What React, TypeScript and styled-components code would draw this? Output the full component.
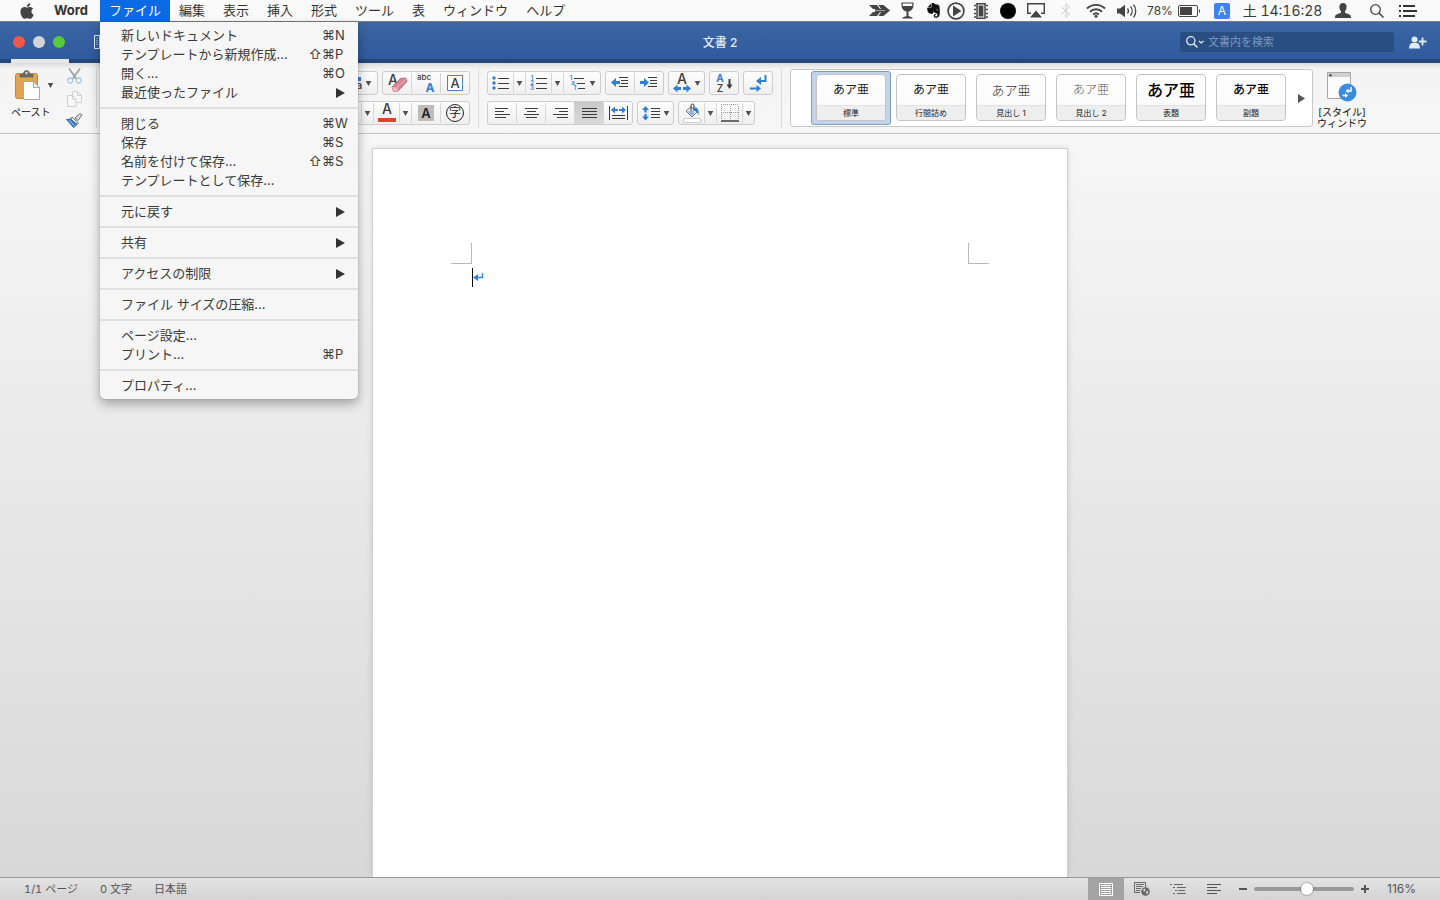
import React from 'react';
import styled, { createGlobalStyle, css } from 'styled-components';
import { FaApple, FaEvernote } from 'react-icons/fa';

const sans = `Inter, "Noto Sans CJK JP", sans-serif`;
const blue = '#2f7fd6';
const ink = '#3c3c3c';

const GlobalStyle = createGlobalStyle`
  * { box-sizing: border-box; }
  body { margin: 0; font-family: ${sans}; color: #333; }
  button, input { font: inherit; color: inherit; margin: 0; padding: 0; border: 0; background: none; }
  svg { display: block; flex: none; overflow: visible; }
  ul { list-style: none; margin: 0; padding: 0; }
`;

const Window = styled.div`
  display: flex;
  flex-direction: column;
  height: 100vh;
  overflow: hidden;
`;

/* ---------- system menu bar ---------- */

const MenuBar = styled.header`
  display: flex;
  justify-content: space-between;
  height: 22px;
  padding-right: 19px;
  background: #fafafa;
  border-bottom: 1px solid #7b7b7b;
  font-size: 13px;
  line-height: 21px;
  position: relative;
  z-index: 2;
`;

const MenuList = styled.nav`
  display: flex;
  padding-left: 9px;
`;

const MenuSlot = styled.div`
  position: relative;
`;

const MenuTitle = styled.button<{ $active?: boolean; $app?: boolean }>`
  display: flex;
  align-items: center;
  min-width: ${(p) => (p.$app ? 55 : 0)}px;
  height: 22px;
  padding: 0 9px 1px;
  white-space: nowrap;
  color: ${(p) => (p.$active ? '#fff' : '#333')};
  background: ${(p) => (p.$active ? '#0b6be4' : 'none')};
  font-weight: ${(p) => (p.$app ? 700 : 400)};
`;

const Dropdown = styled.ul`
  position: absolute;
  top: 22px;
  left: 0;
  width: 258px;
  padding: 4px 0;
  background: #f6f6f6;
  border-radius: 0 0 5px 5px;
  box-shadow: 0 0 1px rgba(0, 0, 0, 0.45), 0 5px 12px rgba(0, 0, 0, 0.32);
`;

const MenuRow = styled.button`
  display: flex;
  align-items: center;
  width: 100%;
  height: 19px;
  padding: 0 9px 0 21px;
  line-height: 19px;
  text-align: left;
  white-space: nowrap;
  color: #3a3a3a;
`;

const MenuLabel = styled.span`
  flex: 1;
`;

const KeyName = styled.span`
  width: 14px;
`;

const SubmenuArrow = styled.span`
  margin-right: 4px;
`;

const MenuRule = styled.li`
  height: 2px;
  margin: 5px 0;
  background: #e0e0e0;
`;

const StatusItems = styled.div`
  display: flex;
`;

const StatusItem = styled.button<{ $w: number }>`
  display: flex;
  align-items: center;
  justify-content: center;
  gap: 5px;
  width: ${(p) => p.$w}px;
  height: 21px;
  white-space: nowrap;
  color: #3a3a3a;
`;

const Percent = styled.span`
  font-size: 12px;
`;

const InputMode = styled.span`
  width: 16px;
  height: 16px;
  border-radius: 2px;
  background: #3f82f0;
  color: #fff;
  font-size: 12px;
  line-height: 16px;
  text-align: center;
`;

const Clock = styled.span`
  font-size: 14px;
  font-variant-numeric: tabular-nums;
`;

/* ---------- window title bar ---------- */

const TitleBar = styled.div`
  display: grid;
  grid-template-columns: 1fr auto 1fr;
  align-items: center;
  height: 37px;
  padding: 3px 13px 0;
  background: linear-gradient(#3c66a5, #2f5b9c);
  flex: none;
`;

const TitleLeft = styled.div`
  display: flex;
  align-items: center;
  gap: 8px;
`;

const Light = styled.button<{ $c: string }>`
  width: 12px;
  height: 12px;
  border-radius: 50%;
  background: ${(p) => p.$c};
`;

const SidebarButton = styled.button`
  margin-left: 21px;
`;

const DocumentTitle = styled.h1`
  margin: 0;
  padding-top: 2px;
  font-size: 12px;
  line-height: 18px;
  font-weight: 500;
  color: #e6ecf5;
`;

const TitleRight = styled.div`
  display: flex;
  align-items: center;
  justify-content: flex-end;
  gap: 15px;
`;

const SearchBox = styled.label`
  display: flex;
  align-items: center;
  gap: 4px;
  width: 214px;
  height: 20px;
  padding-left: 6px;
  border-radius: 3px;
  background: #294e82;
`;

const SearchInput = styled.input`
  flex: 1;
  min-width: 0;
  height: 20px;
  font-size: 11px;
  color: #fff;
  outline: none;
  &::placeholder { color: #7f98bd; opacity: 1; }
`;

const TabStrip = styled.div`
  height: 4px;
  padding-left: 11px;
  background: #23477b;
  flex: none;
`;

const ActiveTab = styled.div`
  width: 58px;
  height: 4px;
  background: #e6e6e6;
`;

/* ---------- ribbon ---------- */

const Ribbon = styled.div`
  display: flex;
  align-items: center;
  height: 71px;
  flex: none;
  background: linear-gradient(#dcdcdc, #f4f4f4 6px, #f6f6f6);
  border-bottom: 1px solid #c6c6c6;
`;

const Divider = styled.div<{ $tight?: boolean }>`
  width: 1px;
  height: 60px;
  margin: 0 ${(p) => (p.$tight ? 0 : 8)}px;
  background: #dcdcdc;
`;

const Clipboard = styled.div`
  display: flex;
  width: 96px;
  height: 60px;
  padding-left: 11px;
`;

const PasteButton = styled.button`
  display: flex;
  flex-direction: column;
  gap: 5px;
  width: 48px;
  padding-top: 2px;
  font-size: 10px;
  line-height: 14px;
  text-align: left;
  white-space: nowrap;
  color: #111;
`;

const PasteIcon = styled.span`
  display: flex;
  align-items: center;
  gap: 7px;
  padding-left: 4px;
`;

const ClipColumn = styled.div`
  display: flex;
  flex-direction: column;
  justify-content: space-between;
  width: 30px;
  align-items: center;
`;

const ClipButton = styled.button`
  display: flex;
`;

const ToolRows = styled.div<{ $w?: number }>`
  display: flex;
  flex-direction: column;
  gap: 6px;
  width: ${(p) => (p.$w ? `${p.$w}px` : 'auto')};
  align-items: ${(p) => (p.$w ? 'flex-end' : 'flex-start')};
`;

const ToolRow = styled.div`
  display: flex;
  gap: 4px;
`;

const ToolGroup = styled.div`
  display: flex;
  height: 24px;
  border: 1px solid #cdcdcd;
  border-radius: 3px;
  background: linear-gradient(#fdfdfd, #efefef);
`;

const ToolButton = styled.button<{ $w?: number; $on?: boolean; $caret?: boolean }>`
  box-sizing: content-box;
  display: flex;
  align-items: center;
  justify-content: center;
  gap: 4px;
  width: ${(p) => p.$w ?? 28}px;
  height: 22px;
  background: ${(p) => (p.$on ? 'linear-gradient(#c9c9c9, #d9d9d9)' : 'none')};
  & + & {
    border-left: 1px solid #d6d6d6;
    ${(p) => p.$caret && css`
      border-image: linear-gradient(transparent 10%, #d6d6d6 10%, #d6d6d6 90%, transparent 90%) 1;
    `}
  }
`;

const Gallery = styled.div`
  display: flex;
  align-items: center;
  height: 58px;
  padding-left: 20px;
  border: 1px solid #c9c9c9;
  border-radius: 3px;
  background: #fff;
`;

const StyleSlot = styled.button<{ $on?: boolean }>`
  width: 80px;
  height: 54px;
  padding: 2px 4px 4px;
  border: 1px solid ${(p) => (p.$on ? '#7c9cc9' : 'transparent')};
  border-radius: 3px;
  background: ${(p) => (p.$on ? '#c3d3ea' : 'none')};
`;

const StyleCard = styled.span`
  display: flex;
  flex-direction: column;
  height: 47px;
  border: 1px solid #c4c4c4;
  border-radius: 4px;
  background: linear-gradient(#fff, #f8f8f8);
  overflow: hidden;
`;

const Sample = styled.span<{ $size: number; $weight: number; $c: string }>`
  height: 30px;
  line-height: 30px;
  font-size: ${(p) => p.$size}px;
  font-weight: ${(p) => p.$weight};
  color: ${(p) => p.$c};
`;

const StyleName = styled.span`
  height: 15px;
  line-height: 14px;
  font-size: 8px;
  color: #222;
  background: #eee;
  border-top: 1px solid #e4e4e4;
`;

const GalleryMore = styled.button`
  display: flex;
  justify-content: center;
  width: 21px;
`;

const StylesPaneButton = styled.button`
  display: flex;
  flex-direction: column;
  align-items: center;
  gap: 5px;
  height: 60px;
  margin-left: 4px;
  padding-top: 4px;
  font-size: 10px;
  line-height: 11px;
  color: #111;
  white-space: nowrap;
`;

/* ---------- document ---------- */

const Desk = styled.main`
  flex: 1;
  min-height: 0;
  display: flex;
  justify-content: center;
  padding-top: 14px;
  overflow: hidden;
  background: linear-gradient(#f7f7f7, #d8d8d8);
`;

const Page = styled.article`
  width: 696px;
  padding: 94px 78px 0;
  border: 1px solid #cfcfcf;
  border-bottom: 0;
  background: #fff;
  box-shadow: 0 0 6px rgba(0, 0, 0, 0.12);
`;

const Margins = styled.div`
  display: flex;
  justify-content: space-between;
`;

const Corner = styled.span<{ $side: 'left' | 'right' }>`
  width: 21px;
  height: 21px;
  border-bottom: 1px solid #b9b9b9;
  ${(p) => (p.$side === 'left'
    ? css`border-right: 1px solid #b9b9b9;`
    : css`border-left: 1px solid #b9b9b9;`)}
`;

const TextLine = styled.div`
  display: flex;
  align-items: center;
  padding: 4px 0 0 21px;
`;

const Caret = styled.span`
  width: 1px;
  height: 19px;
  background: #000;
`;

/* ---------- status bar ---------- */

const StatusBar = styled.footer`
  display: flex;
  align-items: center;
  justify-content: space-between;
  height: 23px;
  flex: none;
  padding: 0 24px;
  border-top: 1px solid #989898;
  background: linear-gradient(#e3e3e3, #d3d3d3);
  font-size: 11px;
  line-height: 22px;
  color: #555;
`;

const StatusTexts = styled.div`
  display: flex;
  gap: 22px;
  font-variant-numeric: tabular-nums;
`;

const ViewTools = styled.div`
  display: flex;
  align-items: center;
`;

const ViewButton = styled.button<{ $on?: boolean }>`
  display: flex;
  align-items: center;
  justify-content: center;
  width: 36px;
  height: 22px;
  background: ${(p) => (p.$on ? '#a3a3a3' : 'none')};
`;

const ZoomButton = styled.button`
  display: flex;
  align-items: center;
  justify-content: center;
  width: 22px;
  height: 22px;
`;

const ZoomSlider = styled.input`
  appearance: none;
  width: 100px;
  height: 14px;
  background: transparent;
  &::-webkit-slider-runnable-track {
    height: 4px;
    border-radius: 2px;
    background: #999;
  }
  &::-webkit-slider-thumb {
    appearance: none;
    width: 12px;
    height: 12px;
    margin-top: -4px;
    border-radius: 50%;
    background: #fff;
    box-shadow: 0 0 1px 1px rgba(0, 0, 0, 0.2);
  }
`;

const ZoomValue = styled.output`
  width: 40px;
  text-align: right;
  font-size: 12px;
`;

/* ---------- drawings ---------- */

const Down = () => (
  <svg width="5" height="5" viewBox="0 0 5 5"><path d="M-.3 0h5.600L2.500 5z" fill="#505050" /></svg>
);

const lines = (rows: [number, number, number][], c = ink) =>
  rows.map(([x, y, w], i) => <path key={i} d={`M${x} ${y}.5h${w}`} stroke={c} strokeWidth="1" />);

const Letter = ({ x, y, s, c = ink, w = 500, children }: {
  x: number; y: number; s: number; c?: string; w?: number; children: React.ReactNode;
}) => (
  <text x={x} y={y} fontSize={s} fill={c} fontWeight={w} fontFamily={sans} textAnchor="middle">{children}</text>
);

const Icon = ({ w, h, children }: { w: number; h: number; children: React.ReactNode }) => (
  <svg width={w} height={h} viewBox={`0 0 ${w} ${h}`} fill="none">{children}</svg>
);

const ArrowLeft = 'M0 4.500 5 0v3h4v3H5v3z';
const ArrowRight = 'M9 4.500 4 0v3H0v3h4v3z';

const Bullets = () => (
  <Icon w={17} h={14}>
    {[2, 7, 12].map((y) => <circle key={y} cx="2" cy={y} r="1.700" fill={blue} />)}
    {lines([[6, 2, 11], [6, 7, 11], [6, 12, 11]])}
  </Icon>
);

const Numbers = () => (
  <Icon w={17} h={16}>
    {['1', '2', '3'].map((n, i) => <Letter key={n} x={2} y={5 + i * 5} s={6} c={blue} w={600}>{n}</Letter>)}
    {lines([[6, 3, 11], [6, 8, 11], [6, 13, 11]])}
  </Icon>
);

const Levels = () => (
  <Icon w={17} h={16}>
    <Letter x={2} y={5} s={6} c={blue} w={600}>1</Letter>
    <Letter x={4} y={10} s={6} c={blue} w={600}>a</Letter>
    <Letter x={6} y={15} s={6} c={blue} w={600}>1</Letter>
    {lines([[5, 3, 10], [8, 8, 8], [9, 13, 7]])}
  </Icon>
);

const Indent = ({ out }: { out?: boolean }) => (
  <Icon w={18} h={12}>
    <path d={out ? ArrowLeft : ArrowRight} transform="translate(0 1)" fill={blue} />
    {lines([[8, 0, 9], [10, 3, 7], [10, 6, 7], [8, 9, 9]])}
  </Icon>
);

const Align = ({ rows }: { rows: [number, number][] }) => (
  <Icon w={15} h={12}>{lines(rows.map(([x, w], i) => [x, i * 3 + 1, w]))}</Icon>
);

const Distribute = () => (
  <Icon w={19} h={14}>
    <path d="M.5 0v14M18.500 0v14" stroke={ink} />
    <path d="M2 4 6 .5V3h3v2H6v2.500zM17 4l-4-3.500V3h-3v2h3v2.500z" fill={blue} />
    {lines([[3, 9, 13], [3, 12, 13]])}
  </Icon>
);

const LineSpacing = () => (
  <Icon w={18} h={15}>
    <path d="M3.500 0 7 4H4.700v2.500H2.300V4H0zM3.500 14.500 7 10.500H4.700V8H2.300v2.500H0z" fill={blue} />
    {lines([[9, 2, 9], [9, 5, 9], [9, 8, 9], [9, 11, 9]])}
  </Icon>
);

const CharScale = () => (
  <Icon w={18} h={20}>
    <Letter x={9} y={11} s={14}>A</Letter>
    <path d="M0 15.500 4.500 11.500v2.500H8v3H4.500v2.500zM18 15.500 13.500 11.500v2.500H10v3h3.500v2.500z" fill={blue} />
  </Icon>
);

const Sort = () => (
  <Icon w={18} h={19}>
    <Letter x={5} y={8} s={10} c={blue} w={700}>A</Letter>
    <Letter x={5} y={18} s={10}>Z</Letter>
    <path d="M14.500 5v8" stroke={ink} strokeWidth="2" />
    <path d="M11.500 10.500h6L14.500 15z" fill={ink} />
  </Icon>
);

const Marks = () => (
  <Icon w={17} h={18}>
    <path d="M15.500 1v6H11" stroke={blue} strokeWidth="2" />
    <path d="M6 7l5-4v8zM11 14.500 6.500 11v7z" fill={blue} />
    <path d="M0 14.500h8" stroke={blue} strokeWidth="2" />
  </Icon>
);

const Bucket = () => (
  <Icon w={18} h={20}>
    <path d="m3 8 5-4 6 5-5 5z" fill="#f4f4f4" stroke="#777" />
    <path d="M8 8V2.500a1.500 1.500 0 0 1 3 0V8" stroke="#333" />
    <path d="M10 4.500c4-1 6.500 2 5.500 8-1-3-2-4-4-5z" fill={blue} />
    <path d="m4.500 8.500 6-1 1 3.500-3 2z" fill="#8db9e8" />
    <path d="M.5 15.500h17v4H.5z" fill="#fff" stroke="#cfcfcf" />
  </Icon>
);

const Borders = () => (
  <Icon w={18} h={18}>
    <path d="M0 .5h18M0 8.500h18M.5 2v14M17.500 2v14M9.500 2v14" stroke="#999" strokeDasharray="1 1" />
    <path d="M0 17h18" stroke={ink} strokeWidth="1.500" />
  </Icon>
);

const FontColor = () => (
  <Icon w={18} h={20}>
    <Letter x={9} y={11} s={14}>A</Letter>
    <path d="M0 15h18v4H0z" fill="#e2412b" />
  </Icon>
);

const ClearFormat = () => (
  <Icon w={21} h={20}>
    <Letter x={6} y={12} s={14}>A</Letter>
    <path d="m5 14 8.500-8.500 5-.5 1.500 3.500L11 18l-4.500.5z" fill="#d98492" stroke="#a95a6a" strokeWidth=".8" />
    <path d="M5 14l5 .5 1 3.500-4.500.5z" fill="#efb4bd" />
    <path d="M10 14.500 19 6" stroke="#f0bcc5" />
  </Icon>
);

const Phonetic = () => (
  <Icon w={20} h={22}>
    <Letter x={8} y={8} s={8}>abc</Letter>
    <Letter x={14} y={20} s={12} c={blue} w={700}>A</Letter>
  </Icon>
);

const Boxed = () => (
  <Icon w={16} h={16}>
    <path d="M.5.500h15v15H.5z" stroke="#3f86cd" fill="#fff" />
    <Letter x={8} y={13} s={13}>A</Letter>
  </Icon>
);

const Shaded = () => (
  <Icon w={16} h={16}>
    <path d="M0 0h16v16H0z" fill="#bdbdbd" />
    <Letter x={8} y={13} s={13} c="#222" w={600}>A</Letter>
  </Icon>
);

const Enclosed = () => (
  <Icon w={18} h={18}>
    <circle cx="9" cy="9" r="8.500" stroke="#222" />
    <Letter x={9} y={13} s={12} c="#222" w={400}>字</Letter>
  </Icon>
);

const CaseIcon = () => (
  <Icon w={12} h={16}>
    <path d="M8 2h3v4H8z" fill={blue} />
    <Letter x={9} y={14} s={11}>a</Letter>
  </Icon>
);

const PasteArt = () => (
  <Icon w={26} h={30}>
    <rect x=".5" y="3.500" width="22" height="25" rx="2" fill="#dfa552" stroke="#c08a3c" />
    <path d="M5 7V4.500h3.500C8.500 1.500 9.500.500 11.500.500s3 1 3 4H18V7z" fill="#6b6b6b" stroke="#555" strokeWidth=".6" />
    <circle cx="11.500" cy="3" r="1.200" fill="#ddd" />
    <path d="M8.500 11.500h10l6 6v12h-16z" fill="#fff" stroke="#a9a9a9" />
    <path d="M18.500 11.500v6h6z" fill="#eee" stroke="#a9a9a9" />
  </Icon>
);

const CutArt = () => (
  <Icon w={15} h={16}>
    <path d="M2 0.500 9.500 11M13 0.500 5.500 11" stroke="#a2a2a2" strokeWidth="1.800" />
    <circle cx="3.200" cy="12.500" r="2.500" stroke="#a9cbe8" strokeWidth="1.300" />
    <circle cx="11.800" cy="12.500" r="2.500" stroke="#a9cbe8" strokeWidth="1.300" />
  </Icon>
);

const CopyArt = () => (
  <Icon w={15} h={16}>
    <path d="M5.500.500h5l4 4v7h-9z" fill="#f8f8f8" stroke="#d0d0d0" />
    <path d="M.5 4.500h5l3.500 3.500v7.500H.5z" fill="#f8f8f8" stroke="#d0d0d0" />
    <path d="M10.500.500v4h4M5.500 4.500V8H9" stroke="#d0d0d0" />
  </Icon>
);

const BrushArt = () => (
  <Icon w={17} h={15}>
    <path d="m9 5 5-4.500 2 1.500-4 5.500z" fill="#ddd" stroke="#666" strokeWidth=".9" />
    <path d="m6 4 6.500 6-1.500 1.500L4.500 6z" fill="#eee" stroke="#555" strokeWidth=".9" />
    <path d="M.5 6.500 4.500 6l6.500 5.500-3.500 3z" fill="#3f83c9" stroke="#2b5a8c" strokeWidth=".8" />
    <path d="m3 7 5.500 6" stroke="#8fc0ee" />
  </Icon>
);

const StylesArt = () => (
  <Icon w={30} h={30}>
    <path d="M.5.500h23v26H.5z" fill="#fbfbfb" stroke="#a6a6a6" />
    <path d="M1 1h22v4H1z" fill="#d0d0d0" />
    <circle cx="3.500" cy="3.200" r="1.300" fill="#555" />
    <circle cx="20.500" cy="20.500" r="9" fill="#3b8be0" />
    <path d="M24 15v4h-3M15.500 23.500h3" stroke="#fff" strokeWidth="1.500" />
    <path d="m18.500 19 3-2.500v5zM21 23.500 18 21v5z" fill="#fff" />
  </Icon>
);

const Feather = () => (
  <Icon w={21} h={13}>
    <path d="M0 1h8l3 4h1L9.500 1h5L21 6.500 14.500 12h-5L12 8h-1l-3 4H0l4-4h2V5H4z" fill="#444" />
    <path d="M3 6.500h13" stroke="#fafafa" strokeWidth=".5" />
  </Icon>
);

const Glass = () => (
  <Icon w={13} h={17}>
    <path d="M.5.500h12c.6 5-1.500 8.500-5 9V14l4 1.500v1h-10v-1L5.500 14V9.500C2 9-.1 5.500.5.500z" fill="#444" />
    <path d="M1.700 1.500h9.600v2.500H1.700z" fill="#fafafa" />
  </Icon>
);

const Play = () => (
  <Icon w={18} h={18}>
    <circle cx="9" cy="9" r="7.900" stroke="#444" strokeWidth="1.700" />
    <path d="M6 3.500 14.500 9 6 14.500z" fill="#444" />
  </Icon>
);

const Chip = () => (
  <Icon w={14} h={16}>
    <path d="M3 .8h8v14.400H3z" stroke="#444" strokeWidth="1.500" />
    <path d="M4.600 2.500h4.800v11H4.600z" fill="#444" />
    <path d="M0 2.500h2M0 6.500h2M0 10.500h2M0 14h2M12 2.500h2M12 6.500h2M12 10.500h2M12 14h2" stroke="#444" strokeWidth="1.500" />
  </Icon>
);

const Disc = () => <Icon w={16} h={16}><circle cx="8" cy="8" r="8" fill="#000" /></Icon>;

const AirPlay = () => (
  <Icon w={18} h={15}>
    <path d="M4 10.300H.7V.7h16.600v9.600H14" stroke="#444" strokeWidth="1.400" />
    <path d="M9 7.500 15 14.500H3z" fill="#444" />
  </Icon>
);

const BluetoothArt = () => (
  <Icon w={10} h={15}>
    <path d="m.5 4 8 7L5 14.300V.7L8.500 4l-8 7" stroke="#ccc" />
  </Icon>
);

const Wifi = () => (
  <Icon w={20} h={15}>
    <path d="M1 5.500a13 13 0 0 1 18 0M4 8.700a8.700 8.700 0 0 1 12 0M7 11.500a4.500 4.500 0 0 1 6 0" stroke="#444" strokeWidth="1.900" />
    <circle cx="10" cy="13.300" r="1.500" fill="#444" />
  </Icon>
);

const Volume = () => (
  <Icon w={21} h={14}>
    <path d="M0 4.500h3L8 .8v12.400L3 9.500H0z" fill="#444" />
    <path d="M10.500 4.500a4 4 0 0 1 0 5M13.500 2.500a7 7 0 0 1 0 9M16.500.700a10 10 0 0 1 0 12.600" stroke="#444" strokeWidth="1.300" />
  </Icon>
);

const Battery = () => (
  <Icon w={23} h={12}>
    <rect x=".5" y=".5" width="19" height="11" rx="1.500" stroke="#444" />
    <path d="M2 2h12v8H2z" fill="#444" />
    <path d="M21 4v4c1.500-.5 1.500-3.500 0-4z" fill="#444" />
  </Icon>
);

const Person = () => (
  <Icon w={16} h={15}>
    <path d="M8 0c2.500 0 3.800 1.800 3.600 4.300-.1 2-.8 3-1.600 4v1.500l5 2c.7.400 1 1.200 1 3.200H0c0-2 .3-2.800 1-3.200l5-2V8.300c-.8-1-1.500-2-1.600-4C4.200 1.800 5.500 0 8 0z" fill="#444" />
  </Icon>
);

const Magnifier = () => (
  <Icon w={14} h={14}>
    <circle cx="5.500" cy="5.500" r="4.800" stroke="#444" strokeWidth="1.300" />
    <path d="m9 9 4.500 4.500" stroke="#444" strokeWidth="1.600" />
  </Icon>
);

const ListArt = () => (
  <Icon w={18} h={12}>
    <path d="M0 1h2M0 6h2M0 11h2M4 1h12M4 6h14M4 11h12" stroke="#333" strokeWidth="2" />
  </Icon>
);

const AddPerson = () => (
  <Icon w={18} h={13}>
    <circle cx="5.500" cy="3.500" r="3" fill="#e3eaf4" />
    <path d="M0 12.500c0-3.500 1.500-5 3-5.500h5c1.500.5 3 2 3 5.500z" fill="#e3eaf4" />
    <path d="M13.500 1.500v8M9.800 5.500h7.700" stroke="#e3eaf4" strokeWidth="1.800" />
  </Icon>
);

/* ---------- data ---------- */

type Entry = { label: string; mods?: string; char?: string; sub?: boolean } | null;

const fileMenu: Entry[] = [
  { label: '新しいドキュメント', mods: '⌘', char: 'N' },
  { label: 'テンプレートから新規作成...', mods: '⇧⌘', char: 'P' },
  { label: '開く...', mods: '⌘', char: 'O' },
  { label: '最近使ったファイル', sub: true },
  null,
  { label: '閉じる', mods: '⌘', char: 'W' },
  { label: '保存', mods: '⌘', char: 'S' },
  { label: '名前を付けて保存...', mods: '⇧⌘', char: 'S' },
  { label: 'テンプレートとして保存...' },
  null,
  { label: '元に戻す', sub: true },
  null,
  { label: '共有', sub: true },
  null,
  { label: 'アクセスの制限', sub: true },
  null,
  { label: 'ファイル サイズの圧縮...' },
  null,
  { label: 'ページ設定...' },
  { label: 'プリント...', mods: '⌘', char: 'P' },
  null,
  { label: 'プロパティ...' },
];

const otherMenus = ['編集', '表示', '挿入', '形式', 'ツール', '表', 'ウィンドウ', 'ヘルプ'];

const statusIcons: [React.ReactNode, number][] = [
  [<Feather />, 27], [<Glass />, 28], [<FaEvernote size={17} color="#111" />, 24], [<Play />, 22],
  [<Chip />, 28], [<Disc />, 26], [<AirPlay />, 30], [<BluetoothArt />, 30], [<Wifi />, 30], [<Volume />, 32],
];

const styleCards = [
  { name: '標準', size: 12, weight: 400, color: '#222' },
  { name: '行間詰め', size: 12, weight: 400, color: '#222' },
  { name: '見出し 1', size: 13, weight: 300, color: '#333' },
  { name: '見出し 2', size: 12, weight: 300, color: '#555' },
  { name: '表題', size: 16, weight: 500, color: '#000' },
  { name: '副題', size: 12, weight: 500, color: '#000' },
];

export default function App() {
  return (
    <Window>
      <GlobalStyle />
      <MenuBar>
        <MenuList>
          <MenuTitle><FaApple size={18} color="#444" /></MenuTitle>
          <MenuTitle $app>Word</MenuTitle>
          <MenuSlot>
            <MenuTitle $active>ファイル</MenuTitle>
            <Dropdown>
              {fileMenu.map((e, i) => (e ? (
                <li key={i}>
                  <MenuRow>
                    <MenuLabel>{e.label}</MenuLabel>
                    {e.mods && <span>{e.mods}</span>}
                    {e.char && <KeyName>{e.char}</KeyName>}
                    {e.sub && (
                      <SubmenuArrow>
                        <svg width="9" height="10" viewBox="0 0 9 10"><path d="M0 0v10l9-5z" fill="#333" /></svg>
                      </SubmenuArrow>
                    )}
                  </MenuRow>
                </li>
              ) : <MenuRule key={i} />))}
            </Dropdown>
          </MenuSlot>
          {otherMenus.map((m) => <MenuTitle key={m}>{m}</MenuTitle>)}
        </MenuList>
        <StatusItems>
          {statusIcons.map(([icon, w], i) => <StatusItem key={i} $w={w}>{icon}</StatusItem>)}
          <StatusItem $w={62}><Percent>78%</Percent><Battery /></StatusItem>
          <StatusItem $w={34}><InputMode>A</InputMode></StatusItem>
          <StatusItem $w={87}><Clock>土 14:16:28</Clock></StatusItem>
          <StatusItem $w={33}><Person /></StatusItem>
          <StatusItem $w={36}><Magnifier /></StatusItem>
          <StatusItem $w={26}><ListArt /></StatusItem>
        </StatusItems>
      </MenuBar>

      <TitleBar>
        <TitleLeft>
          <Light $c="#f2564d" />
          <Light $c="#d2d3d6" />
          <Light $c="#5ac83c" />
          <SidebarButton>
            <Icon w={16} h={14}>
              <path d="M.5.500h15v13H.5zM5.500.500v13" stroke="#e6ecf5" />
              <path d="M3 3v8" stroke="#e6ecf5" strokeDasharray="1 1" />
            </Icon>
          </SidebarButton>
        </TitleLeft>
        <DocumentTitle>文書 2</DocumentTitle>
        <TitleRight>
          <SearchBox>
            <Icon w={18} h={12}>
              <circle cx="4.800" cy="4.800" r="4.100" stroke="#e3eaf4" strokeWidth="1.300" />
              <path d="m8 8 3.500 3.500" stroke="#e3eaf4" strokeWidth="1.500" />
              <path d="m13 5 2.200 2L17.500 5" stroke="#e3eaf4" strokeWidth="1.300" />
            </Icon>
            <SearchInput type="search" placeholder="文書内を検索" />
          </SearchBox>
          <button><AddPerson /></button>
        </TitleRight>
      </TitleBar>
      <TabStrip><ActiveTab /></TabStrip>

      <Ribbon>
        <Clipboard>
          <PasteButton>
            <PasteIcon><PasteArt /><Down /></PasteIcon>
            ペースト
          </PasteButton>
          <ClipColumn>
            <ClipButton><CutArt /></ClipButton>
            <ClipButton><CopyArt /></ClipButton>
            <ClipButton><BrushArt /></ClipButton>
          </ClipColumn>
        </Clipboard>
        <Divider $tight />
        <ToolRows $w={373}>
          <ToolRow>
            <ToolGroup><ToolButton $w={34}><CaseIcon /><Down /></ToolButton></ToolGroup>
            <ToolGroup>
              <ToolButton><ClearFormat /></ToolButton>
              <ToolButton><Phonetic /></ToolButton>
              <ToolButton><Boxed /></ToolButton>
            </ToolGroup>
          </ToolRow>
          <ToolRow>
            <ToolGroup>
              <ToolButton $w={25} />
              <ToolButton $w={11} $caret><Down /></ToolButton>
              <ToolButton $w={25}><FontColor /></ToolButton>
              <ToolButton $w={11} $caret><Down /></ToolButton>
              <ToolButton><Shaded /></ToolButton>
              <ToolButton><Enclosed /></ToolButton>
            </ToolGroup>
          </ToolRow>
        </ToolRows>
        <Divider />
        <ToolRows>
          <ToolRow>
            <ToolGroup>
              <ToolButton $w={25}><Bullets /></ToolButton>
              <ToolButton $w={11} $caret><Down /></ToolButton>
              <ToolButton $w={25}><Numbers /></ToolButton>
              <ToolButton $w={11} $caret><Down /></ToolButton>
              <ToolButton $w={36}><Levels /><Down /></ToolButton>
            </ToolGroup>
            <ToolGroup>
              <ToolButton><Indent out /></ToolButton>
              <ToolButton><Indent /></ToolButton>
            </ToolGroup>
            <ToolGroup><ToolButton $w={35}><CharScale /><Down /></ToolButton></ToolGroup>
            <ToolGroup><ToolButton><Sort /></ToolButton></ToolGroup>
            <ToolGroup><ToolButton><Marks /></ToolButton></ToolGroup>
          </ToolRow>
          <ToolRow>
            <ToolGroup>
              <ToolButton><Align rows={[[0, 13], [0, 9], [0, 15], [0, 11]]} /></ToolButton>
              <ToolButton><Align rows={[[1, 13], [3, 9], [0, 15], [2, 11]]} /></ToolButton>
              <ToolButton><Align rows={[[2, 13], [6, 9], [0, 15], [4, 11]]} /></ToolButton>
              <ToolButton $on><Align rows={[[0, 15], [0, 15], [0, 15], [0, 15]]} /></ToolButton>
              <ToolButton><Distribute /></ToolButton>
            </ToolGroup>
            <ToolGroup><ToolButton $w={35}><LineSpacing /><Down /></ToolButton></ToolGroup>
            <ToolGroup>
              <ToolButton $w={25}><Bucket /></ToolButton>
              <ToolButton $w={11} $caret><Down /></ToolButton>
              <ToolButton $w={25}><Borders /></ToolButton>
              <ToolButton $w={11} $caret><Down /></ToolButton>
            </ToolGroup>
          </ToolRow>
        </ToolRows>
        <Divider />
        <Gallery>
          {styleCards.map((s, i) => (
            <StyleSlot key={s.name} $on={i === 0}>
              <StyleCard>
                <Sample $size={s.size} $weight={s.weight} $c={s.color}>あア亜</Sample>
                <StyleName>{s.name}</StyleName>
              </StyleCard>
            </StyleSlot>
          ))}
          <GalleryMore>
            <svg width="7" height="9" viewBox="0 0 7 9"><path d="M0 0v9l7-4.500z" fill="#555" /></svg>
          </GalleryMore>
        </Gallery>
        <StylesPaneButton>
          <StylesArt />
          <span>[スタイル]<br />ウィンドウ</span>
        </StylesPaneButton>
      </Ribbon>

      <Desk>
        <Page>
          <Margins><Corner $side="left" /><Corner $side="right" /></Margins>
          <TextLine>
            <Caret />
            <Icon w={11} h={9}>
              <path d="M9.500 0v4.500H4" stroke={blue} strokeWidth="1.300" />
              <path d="M0 4.500 5 1v7z" fill={blue} />
            </Icon>
          </TextLine>
        </Page>
      </Desk>

      <StatusBar>
        <StatusTexts>
          <span>1/1 ページ</span>
          <span>0 文字</span>
          <span>日本語</span>
        </StatusTexts>
        <ViewTools>
          <ViewButton $on>
            <Icon w={14} h={13}>
              <path d="M.5.500h13v12H.5z" stroke="#fff" />
              {lines([[2, 2, 10], [2, 4, 10], [2, 6, 10], [2, 8, 10], [2, 10, 10]], '#fff')}
            </Icon>
          </ViewButton>
          <ViewButton>
            <Icon w={16} h={14}>
              <path d="M6 10.500H.5v-10h11V5" stroke="#666" />
              {lines([[2, 2, 8], [2, 4, 7], [2, 6, 5], [2, 8, 4]], '#666')}
              <circle cx="11.500" cy="9.500" r="4.300" fill="#666" />
              <path d="m9 7.500 2-1 .5 2-1.500 1.500zM13 8.500l1.500 1-1.500 3-1-1.500z" fill="#ddd" />
            </Icon>
          </ViewButton>
          <ViewButton>
            <Icon w={16} h={12}>
              {lines([[0, 1, 2], [4, 1, 9], [3, 4, 2], [7, 4, 9], [5, 7, 2], [8, 7, 7], [3, 10, 2], [7, 10, 9]], '#666')}
            </Icon>
          </ViewButton>
          <ViewButton>
            <Icon w={15} h={12}>{lines([[0, 1, 14], [0, 4, 10], [0, 7, 14], [0, 10, 10]], '#555')}</Icon>
          </ViewButton>
          <ZoomButton><Icon w={8} h={8}><path d="M0 4h8" stroke="#555" strokeWidth="2" /></Icon></ZoomButton>
          <ZoomSlider type="range" min={0} max={100} defaultValue={53} aria-label="ズーム" />
          <ZoomButton><Icon w={8} h={8}><path d="M0 4h8M4 0v8" stroke="#555" strokeWidth="2" /></Icon></ZoomButton>
          <ZoomValue>116%</ZoomValue>
        </ViewTools>
      </StatusBar>
    </Window>
  );
}
